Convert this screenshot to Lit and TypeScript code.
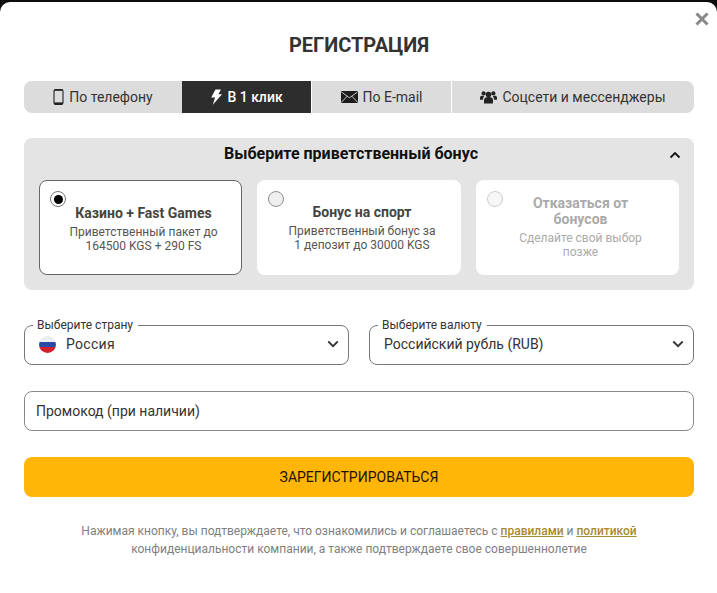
import { LitElement, html, css } from "lit";
import { customElement } from "lit/decorators.js";

const chevron = html`<svg class="chev" viewBox="0 0 12 8" width="12" height="8"><path d="M1.300 1.500 6 6.200l4.700-4.700" fill="none" stroke="#333" stroke-width="1.800"/></svg>`;

@customElement("app-root")
export class AppRoot extends LitElement {
  static styles = css`
    :host { display: block; width: 717px; height: 593px; background: #0c0c0c; overflow: hidden; font-family: Roboto, "Liberation Sans", sans-serif; color: #333; }
    * { box-sizing: border-box; }
    .modal { position: relative; height: 591px; margin-top: 2px; background: #fff; border-radius: 10px 10px 0 0; padding: 30px 23px 0 24px; }
    .close { position: absolute; top: 10px; right: 8px; width: 14px; height: 14px; display: block; }
    h1 { margin: 0; height: 26px; font-size: 20px; line-height: 26px; font-weight: 700; text-align: center; color: #333; }
    .tabs { display: grid; grid-template-columns: 158px 130px 140px 242px; height: 32px; margin-top: 23px; border-radius: 8px; overflow: hidden; }
    .tab { display: flex; align-items: center; justify-content: center; gap: 5px; background: #dcdcdc; font-size: 14px; color: #333; border-right: 1px solid #fff; white-space: nowrap; }
    .tab:first-child { border-right: 0; }
    .tab:last-child { border-right: 0; }
    .tab.active { background: #2d2d2d; color: #fff; font-weight: 500; }
    .tab svg { flex: none; }
    .panel { margin-top: 25px; height: 152px; background: #e4e4e4; border-radius: 8px; padding: 0 15px; position: relative; }
    .panel-title { height: 42px; display: flex; align-items: center; justify-content: center; padding: 0 16px 12px 0; font-size: 16px; font-weight: 700; color: #111; }
    .up { position: absolute; top: 13px; right: 13px; }
    .cards { display: grid; grid-template-columns: 203px 204px 203px; column-gap: 15px; }
    .card { position: relative; height: 95px; background: #fff; border-radius: 8px; display: flex; flex-direction: column; align-items: center; text-align: center; padding: 0 9px 0 15px; }
    .card.sel { border: 1px solid #666; }
    .radio { position: absolute; left: 11px; top: 11px; width: 16px; height: 16px; border-radius: 50%; border: 1px solid #8f8f8f; background: #efefef; }
    .card.sel .radio { left: 10px; top: 10px; background: #fff; border-color: #777; }
    .card.sel .radio::after { content: ""; position: absolute; left: 2.500px; top: 2.500px; width: 9px; height: 9px; border-radius: 50%; background: #000; }
    .name { font-size: 14px; line-height: 16px; font-weight: 700; margin-top: 24px; color: #444; }
    .desc { font-size: 12px; line-height: 14px; margin-top: 4px; color: #555; }
    .card.off .name { color: #aaa; margin-top: 15px; padding: 0 18px; }
    .card.off .radio { opacity: .45; }
    .card.off .desc { color: #aaa; margin-top: 4px; padding: 0 18px; }
    .selects { display: grid; grid-template-columns: 325px 325px; column-gap: 20px; margin-top: 35px; }
    .field { position: relative; height: 40px; border: 1px solid #777; border-radius: 8px; display: flex; align-items: center; padding: 0 9px 2px 14px; font-size: 14px; color: #333; }
    .legend { position: absolute; left: 8px; top: -8px; padding: 0 5px 0 4px; background: #fff; font-size: 12px; line-height: 14px; color: #333; }
    .flag { width: 17px; height: 17px; border-radius: 50%; margin-right: 10px; flex: none; background: linear-gradient(#eceff1 0 34%, #2a4aa8 34% 66%, #d3202f 66%); }
    .value { flex: 1; }
    .flag + .value { letter-spacing: .3px; }
    .promo { margin-top: 26px; height: 40px; border: 1px solid #888; border-radius: 8px; display: flex; align-items: center; padding: 0 11px; font-size: 14px; color: #333; }
    .btn { margin-top: 26px; height: 40px; background: #ffb606; border-radius: 8px; display: flex; align-items: center; justify-content: center; font-size: 14px; color: #1a1208; }
    .note { margin-top: 25px; text-align: center; font-size: 12px; line-height: 18px; color: #808080; }
    .note a { color: #a88a30; text-decoration: underline; font-weight: 500; }
  `;

  render() {
    return html`
      <div class="modal">
        <svg class="close" viewBox="0 0 14 14"><path d="M1.500 1.500l11 11M12.500 1.500l-11 11" stroke="#888" stroke-width="3" fill="none"/></svg>
        <h1>РЕГИСТРАЦИЯ</h1>
        <div class="tabs">
          <div class="tab">
            <svg width="11" height="16" viewBox="0 0 11 16"><rect x="1" y=".6" width="9" height="14.800" rx="1.600" fill="none" stroke="#222" stroke-width="1.100"/><rect x="1" y="13.400" width="9" height="2" fill="#222"/><rect x="1" y=".6" width="9" height="1.200" fill="#222"/></svg>
            <span>По телефону</span>
          </div>
          <div class="tab active">
            <svg width="12" height="16" viewBox="0 0 12 16"><path d="M5.500 .5h5.500L8.400 5.300H12L2.800 15.800l2.300-7.300H1.200z" fill="#fff"/></svg>
            <span>В 1 клик</span>
          </div>
          <div class="tab">
            <svg width="17" height="12" viewBox="0 0 17 12"><rect width="17" height="12" rx="1" fill="#1c1c1c"/><path d="M.5 1l8 5.800 8-5.800M.5 11.200l5.700-6M16.500 11.200l-5.700-6" fill="none" stroke="#dcdcdc" stroke-width=".9"/></svg>
            <span>По E-mail</span>
          </div>
          <div class="tab">
            <svg width="17" height="14" viewBox="0 0 17 14"><circle cx="8.500" cy="4.600" r="2.800" fill="#222"/><circle cx="3.600" cy="3.400" r="2.100" fill="#222"/><circle cx="13.400" cy="3.400" r="2.100" fill="#222"/><path d="M4 13.600V10c0-1.900 1.600-2.900 4.500-2.900S13 8.100 13 10v3.600z" fill="#222"/><path d="M0 9.800V7.400c0-1.200 1-1.700 2.300-1.700 1 0 1.600.2 2 .6C3.300 7.200 3 8.400 3 9.800zM17 9.800V7.400c0-1.200-1-1.700-2.300-1.700-1 0-1.600.2-2 .6 1 .9 1.300 2.100 1.300 3.500z" fill="#222"/></svg>
            <span>Соцсети и мессенджеры</span>
          </div>
        </div>
        <div class="panel">
          <div class="panel-title">Выберите приветственный бонус</div>
          <svg class="up" width="12" height="8" viewBox="0 0 12 8"><path d="M1.500 6.500 6 2l4.500 4.500" fill="none" stroke="#111" stroke-width="1.800"/></svg>
          <div class="cards">
            <div class="card sel"><span class="radio"></span><div class="name">Казино + Fast Games</div><div class="desc">Приветственный пакет до<br />164500 KGS + 290 FS</div></div>
            <div class="card"><span class="radio"></span><div class="name">Бонус на спорт</div><div class="desc">Приветственный бонус за<br />1 депозит до 30000 KGS</div></div>
            <div class="card off"><span class="radio"></span><div class="name">Отказаться от бонусов</div><div class="desc">Сделайте свой выбор позже</div></div>
          </div>
        </div>
        <div class="selects">
          <div class="field"><span class="legend">Выберите страну</span><span class="flag"></span><span class="value">Россия</span>${chevron}</div>
          <div class="field"><span class="legend">Выберите валюту</span><span class="value">Российский рубль (RUB)</span>${chevron}</div>
        </div>
        <div class="promo">Промокод (при наличии)</div>
        <div class="btn">ЗАРЕГИСТРИРОВАТЬСЯ</div>
        <div class="note">Нажимая кнопку, вы подтверждаете, что ознакомились и соглашаетесь с <a>правилами</a> и <a>политикой</a><br />конфиденциальности компании, а также подтверждаете свое совершеннолетие</div>
      </div>
    `;
  }
}
